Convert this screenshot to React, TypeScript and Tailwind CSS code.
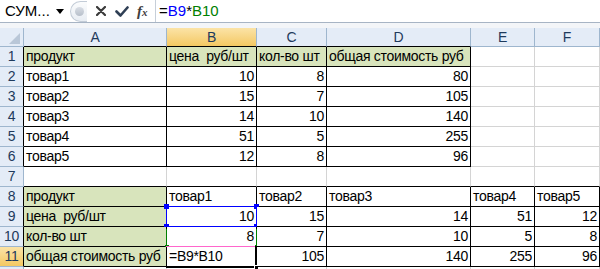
import { Fragment, type ReactNode } from 'react';

type Cell = { v?: string; num?: boolean; green?: boolean };

const font = "font-['Liberation_Sans',Arial,sans-serif]";

const blank: Cell = {};
const t = (v: string, green = false): Cell => ({ v, green });
const n = (v: string): Cell => ({ v, num: true });

const rows: Cell[][] = [
  [t('продукт', true), t('цена  руб/шт', true), t('кол-во шт', true), t('общая стоимость руб', true), blank, blank],
  [t('товар1'), n('10'), n('8'), n('80'), blank, blank],
  [t('товар2'), n('15'), n('7'), n('105'), blank, blank],
  [t('товар3'), n('14'), n('10'), n('140'), blank, blank],
  [t('товар4'), n('51'), n('5'), n('255'), blank, blank],
  [t('товар5'), n('12'), n('8'), n('96'), blank, blank],
  [blank, blank, blank, blank, blank, blank],
  [t('продукт', true), t('товар1'), t('товар2'), t('товар3'), t('товар4'), t('товар5')],
  [t('цена  руб/шт', true), n('10'), n('15'), n('14'), n('51'), n('12')],
  [t('кол-во шт', true), n('8'), n('7'), n('10'), n('5'), n('8')],
  [t('общая стоимость руб', true), t('=B9*B10'), n('105'), n('140'), n('255'), n('96')],
];

const cols = ['A', 'B', 'C', 'D', 'E', 'F'];

// row index is 1-based like the sheet
function inTable(r: number, c: number) {
  if (c < 0) return false;
  if (r >= 1 && r <= 6 && c <= 3) return true;
  if (r >= 8 && r <= 11 && c <= 5) return true;
  return false;
}

function cellClass(r: number, c: number, cell: Cell) {
  const right = inTable(r, c) || inTable(r, c + 1) ? 'border-r-black' : 'border-r-[#d4d4d4]';
  const bottom = inTable(r, c) || inTable(r + 1, c) ? 'border-b-black' : 'border-b-[#d4d4d4]';
  const fill = cell.green ? 'bg-[#d8e4bc]' : 'bg-white';
  const align = cell.num ? 'justify-end pr-[2px]' : 'justify-start pl-[2px]';
  return `relative flex items-center whitespace-pre border-r border-b ${right} ${bottom} ${fill} ${align}`;
}

const handle = 'absolute h-[5px] w-[5px]';

// range highlights drawn over cells B9, B10 and the active cell B11
const overlays: Record<string, ReactNode> = {
  '9-1': (
    <>
      <div className="absolute -left-px -top-px -right-px -bottom-px border border-[#0000ff]" />
      <div className={`${handle} -left-[3px] -top-[3px] bg-[#0000ff]`} />
      <div className={`${handle} -right-[3px] -top-[3px] bg-[#0000ff]`} />
      <div className={`${handle} -left-[3px] -bottom-[3px] bg-[#0000ff]`} />
      <div className={`${handle} -right-[3px] -bottom-[3px] bg-[#0000ff]`} />
    </>
  ),
  '10-1': (
    <>
      <div className="absolute -left-px top-[2px] -right-px -bottom-px border-x border-[#008000]" />
      <div className="absolute -left-[2px] -bottom-[2px] h-[3px] w-[4px] bg-[#008000]" />
      <div className="absolute -right-[3px] -bottom-[2px] h-[3px] w-[4px] bg-[#008000]" />
    </>
  ),
  '11-1': (
    <>
      <div className="absolute -left-px -top-px right-0 h-px bg-[#ff66cc]" />
      <div className="absolute -right-px -top-px -bottom-[2px] w-[2px] bg-black" />
      <div className="absolute -left-px -right-px -bottom-[2px] h-[2px] bg-black" />
      <div className="absolute -right-[3px] -bottom-[4px] h-[5px] w-[5px] border border-white bg-black" />
    </>
  ),
};

function FormulaBar() {
  return (
    <div className="flex h-[23px] border-b border-[#a7b4c4] bg-white">
      <div className="flex w-[70px] items-center justify-between pl-[5px] pr-[6px] text-[15px] text-black">
        <span>СУМ...</span>
        <svg width="8" height="5" viewBox="0 0 8 5">
          <path d="M0 0h8L4 5z" fill="#000" />
        </svg>
      </div>
      <div className="flex w-[85px] items-center">
        <div className="flex h-[21px] w-[17px] items-center justify-center rounded-l-full border border-r-0 border-[#c3ccd7] bg-gradient-to-b from-[#fbfcfd] to-[#e8edf3]">
          <div className="h-[9px] w-[9px] rounded-full bg-gradient-to-b from-[#d9dee5] to-[#b7bfca]" />
        </div>
        <svg className="ml-[9px]" width="10" height="10" viewBox="0 0 10 10">
          <path d="M1 1l8 8M9 1l-8 8" stroke="#3a3a3a" strokeWidth="2.2" strokeLinecap="round" />
        </svg>
        <svg className="ml-[9px]" width="14" height="11" viewBox="0 0 14 11">
          <path d="M1.5 5.5l4 4 7-8" stroke="#2f3f55" strokeWidth="2.6" fill="none" strokeLinecap="round" strokeLinejoin="round" />
        </svg>
        <span className="ml-[8px] font-['Liberation_Serif',serif] text-[15px] font-bold italic leading-none text-[#404040]">
          f<span className="text-[11px]">x</span>
        </span>
      </div>
      <div className="flex flex-1 items-center border-l border-[#c7cfd9] pl-[3px] text-[15px] text-black">
        =<span className="text-[#0000ff]">B9</span>*<span className="text-[#008000]">B10</span>
      </div>
    </div>
  );
}

export default function App() {
  return (
    <div className={`h-[269px] w-[600px] overflow-hidden bg-white text-[14px] text-black ${font}`}>
      <FormulaBar />
      <div className="h-[5px] bg-[#f3f5f8]" />

      <div className="grid grid-cols-[24px_143px_90px_70px_144px_64px_65px] grid-rows-[19px_repeat(12,20px)] tracking-[-0.3px]">
        {/* corner */}
        <div className="flex items-end justify-end border-r border-b border-[#9eb6ce] bg-[#e4ecf7] pb-[2px] pr-[3px]">
          <svg width="11" height="11" viewBox="0 0 11 11">
            <path d="M11 0v11H0z" fill="#b9c7d8" />
          </svg>
        </div>
        {cols.map((c, i) => (
          <div
            key={c}
            className={`flex items-center justify-center border-r border-b border-r-[#9eb6ce] text-[#1e3a5c] ${
              inTable(1, i) ? 'border-b-black' : 'border-b-[#9eb6ce]'
            } ${c === 'B' ? 'bg-gradient-to-b from-[#fbe3a6] to-[#f4c861]' : 'bg-[#e4ecf7]'}`}
          >
            {c}
          </div>
        ))}

        {rows.map((row, ri) => {
          const r = ri + 1;
          return (
            <Fragment key={r}>
              <div
                className={`flex items-center justify-center border-r border-b border-b-[#9eb6ce] text-[#1e3a5c] ${
                  inTable(r, 0) ? 'border-r-black' : 'border-r-[#9eb6ce]'
                } ${r === 11 ? 'bg-gradient-to-b from-[#fbe3a6] to-[#f4c861]' : 'bg-[#e4ecf7]'}`}
              >
                {r}
              </div>
              {row.map((cell, c) => (
                <div key={c} className={cellClass(r, c, cell)}>
                  {cell.v}
                  {overlays[`${r}-${c}`]}
                </div>
              ))}
            </Fragment>
          );
        })}

        {/* partly visible row 12 */}
        <div className="border-r border-[#9eb6ce] bg-[#e4ecf7]" />
        {cols.map((c) => (
          <div key={c} className="border-r border-[#d4d4d4]" />
        ))}
      </div>
    </div>
  );
}
